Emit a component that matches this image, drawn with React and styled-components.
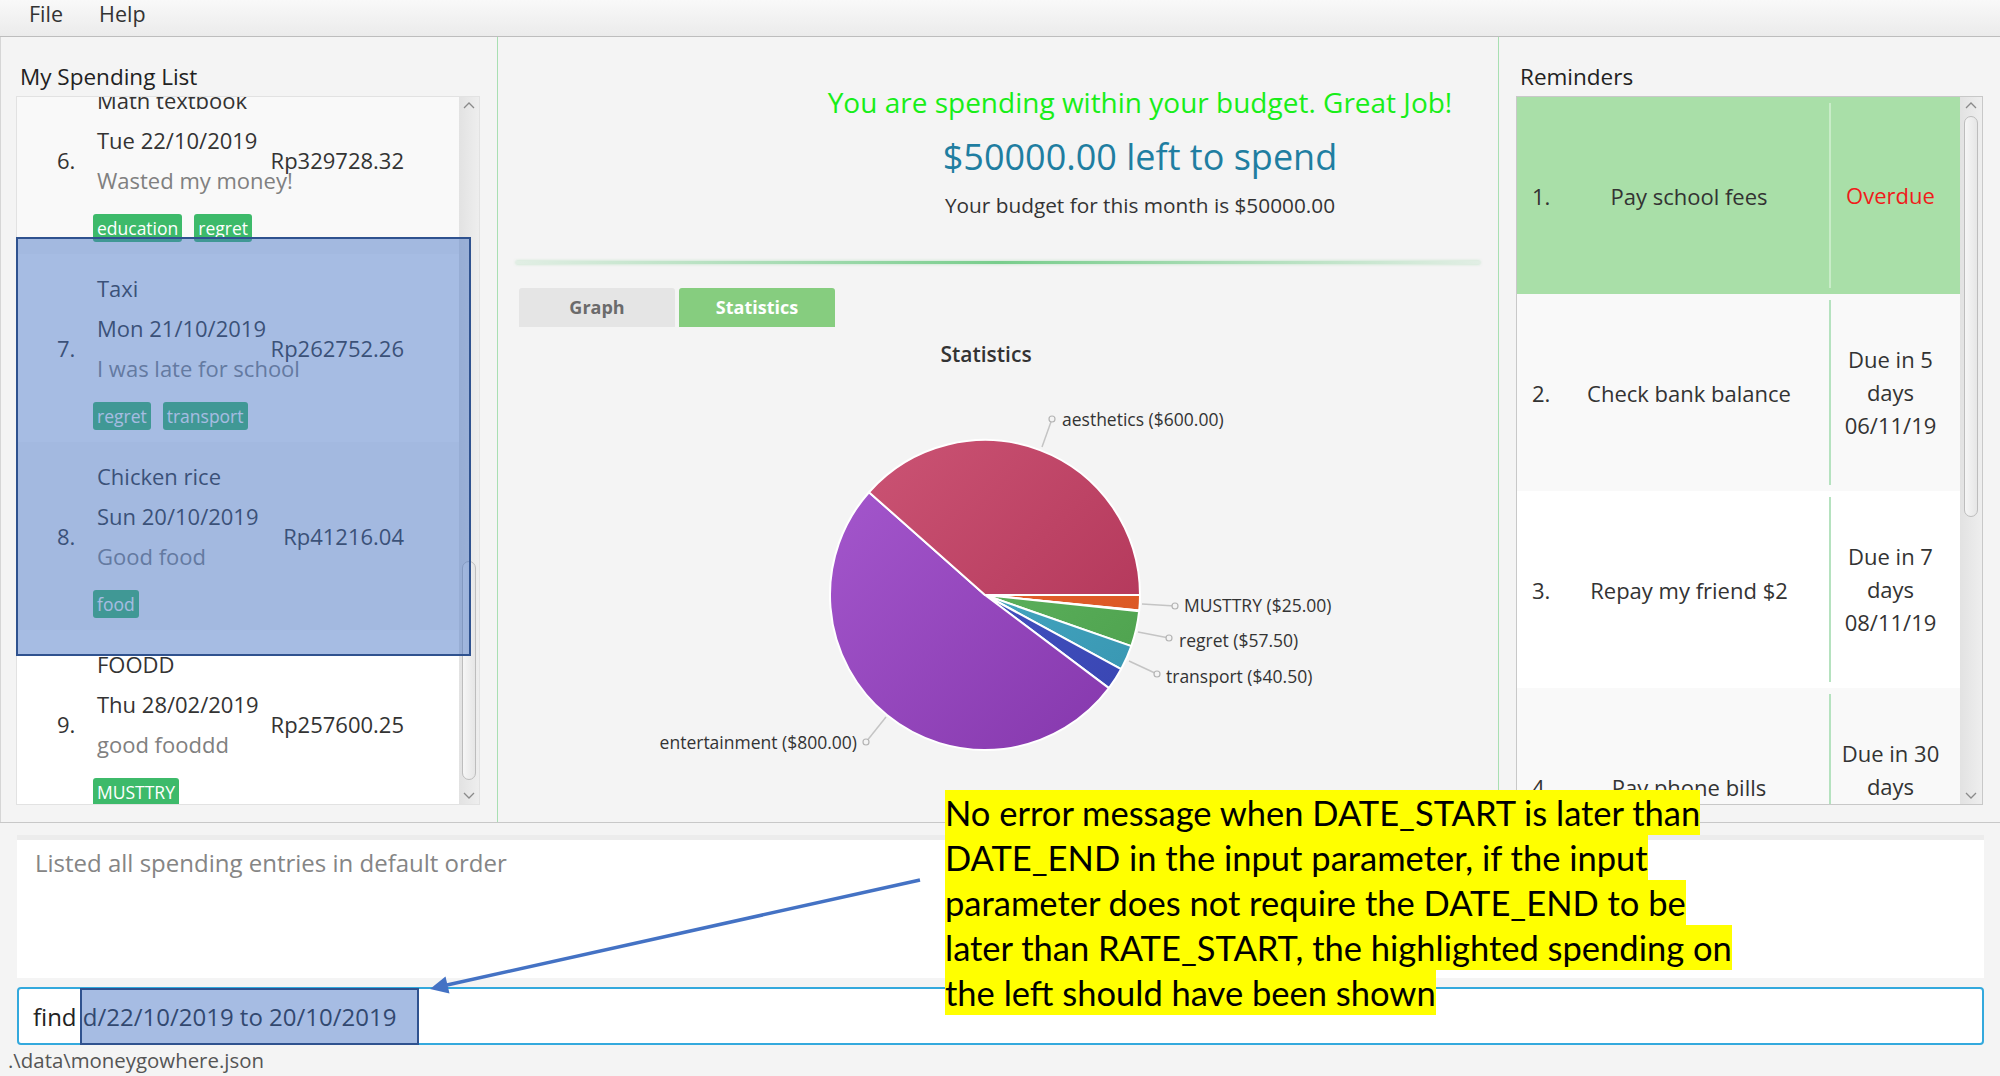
import React from 'react';
import styled, { createGlobalStyle } from 'styled-components';

const GlobalStyle = createGlobalStyle`
  html, body {
    margin: 0;
    padding: 0;
  }
  body {
    background: #f4f4f4;
    font-family: "Open Sans", "Noto Sans", sans-serif;
    color: #333;
  }
  * {
    box-sizing: border-box;
  }
`;

const Window = styled.div`
  position: relative;
  width: 2000px;
  height: 1076px;
  display: flex;
  flex-direction: column;
  overflow: hidden;
  background: #f4f4f4;
`;

const MenuBar = styled.div`
  height: 37px;
  flex: none;
  display: flex;
  align-items: flex-start;
  gap: 36px;
  padding: 1px 0 0 29px;
  background: linear-gradient(#f9f9f9, #ebebeb);
  border-bottom: 1px solid #bdbdbd;
`;

const MenuItem = styled.span`
  font-size: 21.5px;
  line-height: 26px;
  color: #333;
`;

const Main = styled.div`
  height: 786px;
  flex: none;
  display: flex;
  border-bottom: 1px solid #c8c8c8;
`;

const SidePane = styled.div`
  width: ${p => p.width}px;
  flex: none;
  display: flex;
  flex-direction: column;
  padding: 25px 17px 0 ${p => p.padLeft}px;
  border-left: ${p => (p.edge ? '1px solid #d6d6d6' : 'none')};
`;

const PaneTitle = styled.div`
  font-size: 22.5px;
  line-height: 30px;
  color: #222;
  margin: 0 0 4px 4px;
`;

const ListBox = styled.div`
  height: 709px;
  display: flex;
  background: #fff;
  border: 1px solid ${p => p.border};
`;

const Cells = styled.div`
  flex: 1;
  overflow: hidden;
`;

const CellsInner = styled.div`
  margin-top: ${p => p.offset}px;
`;

/* ---------- spending list ---------- */

const SpendRow = styled.div`
  height: 188px;
  display: flex;
  align-items: center;
  padding-left: 40px;
  background: ${p => (p.alt ? '#f9f9f9' : '#ffffff')};
  font-size: 22px;
  color: #333;
`;

const SpendIndex = styled.div`
  width: 40px;
  flex: none;
`;

const SpendBody = styled.div`
  width: 170px;
  flex: none;
  align-self: flex-start;
  padding-top: 14px;
  white-space: nowrap;
`;

const SpendLine = styled.div`
  line-height: 40px;
  color: ${p => (p.muted ? '#808080' : '#333')};
`;

const TagRow = styled.div`
  display: flex;
  gap: 12px;
  margin: 14px 0 0 -4px;
`;

const Tag = styled.span`
  height: 28px;
  line-height: 28px;
  padding: 0 4px;
  font-size: 17.5px;
  color: #fff;
  background: #3dba6a;
  border-radius: 3px;
`;

const SpendAmount = styled.div`
  flex: 1;
  text-align: right;
  padding-right: 55px;
  white-space: nowrap;
`;

/* ---------- scrollbars ---------- */

const ScrollTrack = styled.div`
  width: ${p => p.width}px;
  flex: none;
  display: flex;
  flex-direction: column;
  align-items: center;
  background: linear-gradient(to right, #e2e2e2, #eeeeee);
`;

const ScrollArrow = styled.div`
  height: 16px;
  flex: none;
  display: flex;
  align-items: center;
  justify-content: center;
`;

const ScrollSpace = styled.div`
  flex: 1;
  width: 100%;
  display: flex;
  flex-direction: column;
  align-items: center;
`;

const ScrollThumb = styled.div`
  width: 14px;
  margin-top: ${p => p.top}px;
  height: ${p => p.size}px;
  border: 1px solid #bdbdbd;
  border-radius: 7px;
  background: linear-gradient(to right, #f6f6f6, #e6e6e6);
`;

const Chevron = ({ up }) => (
  <svg width="12" height="8" viewBox="0 0 12 8">
    <polyline
      points={up ? '1,7 6,2 11,7' : '1,1 6,6 11,1'}
      fill="none"
      stroke="#8a8a8a"
      strokeWidth="1.3"
    />
  </svg>
);

const ScrollBar = ({ width, top, size }) => (
  <ScrollTrack width={width}>
    <ScrollArrow>
      <Chevron up />
    </ScrollArrow>
    <ScrollSpace>
      <ScrollThumb top={top} size={size} />
    </ScrollSpace>
    <ScrollArrow>
      <Chevron />
    </ScrollArrow>
  </ScrollTrack>
);

/* ---------- centre ---------- */

const CenterPane = styled.div`
  flex: 1;
  display: flex;
  flex-direction: column;
  border-left: 1px solid #a8dfb2;
  border-right: 1px solid #a8dfb2;
`;

const BudgetBlock = styled.div`
  padding: 47px 0 0 284px;
  text-align: center;
`;

const BudgetStatus = styled.div`
  font-size: 28px;
  line-height: 36px;
  color: #18ee18;
`;

const BudgetLeft = styled.div`
  margin-top: 12px;
  font-size: 36px;
  line-height: 50px;
  color: #1f7ea1;
`;

const BudgetNote = styled.div`
  margin-top: 9px;
  font-size: 20.8px;
  line-height: 28px;
  color: #333;
`;

const Separator = styled.div`
  margin: 42px 18px 0 18px;
  height: 3px;
  background: linear-gradient(
    to right,
    rgba(120, 205, 140, 0.15),
    #78cd8c 50%,
    rgba(120, 205, 140, 0.15)
  );
  box-shadow: 0 0 3px rgba(120, 205, 140, 0.5);
`;

const TabBar = styled.div`
  display: flex;
  gap: 4px;
  margin: 24px 0 0 21px;
`;

const Tab = styled.div`
  width: 156px;
  height: 39px;
  line-height: 39px;
  text-align: center;
  font-size: 18px;
  font-weight: 700;
  border-radius: 3px 3px 0 0;
  color: ${p => (p.active ? '#ffffff' : '#6b6b6b')};
  background: ${p => (p.active ? '#86cd7f' : '#e5e5e5')};
`;

const ChartTitle = styled.div`
  margin-top: 12px;
  line-height: 30px;
  text-align: center;
  font-size: 21px;
  font-weight: 600;
  color: #333;
  padding-right: 24px;
`;

const ChartArea = styled.div`
  flex: 1;
`;

/* ---------- reminders ---------- */

const ReminderRow = styled.div`
  height: 197px;
  display: flex;
  background: ${p => p.bg};
  font-size: 22px;
  color: #333;
`;

const ReminderIndex = styled.div`
  width: 32px;
  flex: none;
  align-self: center;
  padding-left: 15px;
`;

const ReminderDesc = styled.div`
  width: 280px;
  flex: none;
  align-self: center;
  text-align: center;
  white-space: nowrap;
`;

const ReminderDivider = styled.div`
  width: 2px;
  flex: none;
  margin: 6px 0;
  background: ${p => (p.selected ? '#c9ecc8' : '#b5e2bf')};
`;

const ReminderDue = styled.div`
  flex: 1;
  align-self: center;
  text-align: center;
  padding-right: 10px;
  line-height: 33px;
  color: ${p => (p.overdue ? '#f01b1b' : '#333')};
`;

/* ---------- bottom ---------- */

const ResultBox = styled.div`
  margin: 12px 16px 0 17px;
  height: 143px;
  flex: none;
  padding: 7px 18px;
  background: #fff;
  border-top: 5px solid #ececec;
  font-size: 24px;
  line-height: 32px;
  color: #858585;
`;

const CommandBox = styled.div`
  margin: 9px 16px 0 17px;
  height: 58px;
  flex: none;
  display: flex;
  align-items: center;
  padding-left: 14px;
  background: #fff;
  border: 2px solid #33a9dd;
  border-radius: 4px;
  font-size: 24px;
  color: #222;
  white-space: pre;
`;

const StatusBar = styled.div`
  flex: 1;
  padding-left: 8px;
  font-size: 20.4px;
  line-height: 31px;
  color: #555;
`;

/* ---------- overlays ---------- */

const Highlight = styled.div`
  position: absolute;
  left: ${p => p.x}px;
  top: ${p => p.y}px;
  width: ${p => p.w}px;
  height: ${p => p.h}px;
  background: rgba(68, 114, 196, 0.48);
  border: 2px solid #2f528f;
`;

const Annotation = styled.div`
  position: absolute;
  left: 945px;
  top: 790px;
  font-family: Lato, "Liberation Sans", sans-serif;
  font-size: 34.5px;
  color: #000;
`;

const AnnotationLine = styled.div`
  width: fit-content;
  height: 45px;
  line-height: 45px;
  background: #ffff00;
  white-space: nowrap;
`;

const ArrowLayer = styled.svg`
  position: absolute;
  left: 420px;
  top: 870px;
`;

/* ---------- data ---------- */

const spendings = [
  { no: 6, name: 'Math textbook', date: 'Tue 22/10/2019', note: 'Wasted my money!', cost: 'Rp329728.32', tags: ['education', 'regret'] },
  { no: 7, name: 'Taxi', date: 'Mon 21/10/2019', note: 'I was late for school', cost: 'Rp262752.26', tags: ['regret', 'transport'] },
  { no: 8, name: 'Chicken rice', date: 'Sun 20/10/2019', note: 'Good food', cost: 'Rp41216.04', tags: ['food'] },
  { no: 9, name: 'FOODD', date: 'Thu 28/02/2019', note: 'good fooddd', cost: 'Rp257600.25', tags: ['MUSTTRY'] },
];

const reminders = [
  { no: 1, text: 'Pay school fees', due: ['Overdue'], overdue: true, bg: '#a9dfa8' },
  { no: 2, text: 'Check bank balance', due: ['Due in 5', 'days', '06/11/19'], bg: '#f9f9f9' },
  { no: 3, text: 'Repay my friend $2', due: ['Due in 7', 'days', '08/11/19'], bg: '#ffffff' },
  { no: 4, text: 'Pay phone bills', due: ['Due in 30', 'days', '06/12/19'], bg: '#f9f9f9' },
];

// clockwise from 3 o'clock, like the JavaFX pie
const slices = [
  { value: 25, light: '#ea6c38', dark: '#d8521f' },
  { value: 1, light: '#fbb53a', dark: '#f29a10' },
  { value: 57.5, light: '#6cc06c', dark: '#4a9e4a' },
  { value: 40.5, light: '#52b5d0', dark: '#3593ae' },
  { value: 36, light: '#4b5dcc', dark: '#3743b0' },
  { value: 800, light: '#a659cf', dark: '#8436ab' },
  { value: 600, light: '#cd5676', dark: '#ad3054' },
];

const labels = [
  { text: 'aesthetics ($600.00)', tx: 564, ty: 57, mx: 554, my: 50, ex: 544, ey: 78 },
  { text: 'MUSTTRY ($25.00)', tx: 686, ty: 243, mx: 677, my: 237, ex: 644, ey: 235 },
  { text: 'regret ($57.50)', tx: 681, ty: 278, mx: 671, my: 269, ex: 640, ey: 263 },
  { text: 'transport ($40.50)', tx: 668, ty: 314, mx: 659, my: 305, ex: 631, ey: 292 },
  { text: 'entertainment ($800.00)', tx: 359, ty: 380, mx: 368, my: 373, ex: 388, ey: 348, end: true },
];

const PieChart = () => {
  const cx = 487;
  const cy = 226;
  const r = 155;
  const total = slices.reduce((s, d) => s + d.value, 0);
  let angle = 0;
  const point = a => {
    const rad = (a * Math.PI) / 180;
    return [cx + r * Math.cos(rad), cy + r * Math.sin(rad)];
  };
  const paths = slices.map((d, i) => {
    const sweep = (d.value / total) * 360;
    const [x0, y0] = point(angle);
    const [x1, y1] = point(angle + sweep);
    angle += sweep;
    const large = sweep > 180 ? 1 : 0;
    return {
      id: `slice${i}`,
      d: `M${cx},${cy} L${x0.toFixed(2)},${y0.toFixed(2)} A${r},${r} 0 ${large} 1 ${x1.toFixed(2)},${y1.toFixed(2)} Z`,
      ...d,
    };
  });

  return (
    <svg width="1000" height="440" viewBox="0 0 1000 440">
      <defs>
        {paths.map(p => (
          <linearGradient
            key={p.id}
            id={p.id}
            gradientUnits="userSpaceOnUse"
            x1={cx - r}
            y1={cy - r}
            x2={cx + r}
            y2={cy + r}
          >
            <stop offset="0" stopColor={p.light} />
            <stop offset="1" stopColor={p.dark} />
          </linearGradient>
        ))}
      </defs>
      {paths.map(p => (
        <path key={p.id} d={p.d} fill={`url(#${p.id})`} stroke="#ffffff" strokeWidth="2" strokeLinejoin="round" />
      ))}
      {labels.map(l => (
        <g key={l.text}>
          <line x1={l.mx} y1={l.my} x2={l.ex} y2={l.ey} stroke="#c4c4c4" strokeWidth="1.5" />
          <circle cx={l.mx} cy={l.my} r="3" fill="#f4f4f4" stroke="#b4b4b4" strokeWidth="1.2" />
          <text
            x={l.tx}
            y={l.ty}
            textAnchor={l.end ? 'end' : 'start'}
            fontFamily='"Open Sans", "Noto Sans", sans-serif'
            fontSize="17.5"
            fill="#333"
          >
            {l.text}
          </text>
        </g>
      ))}
    </svg>
  );
};

const Arrow = () => (
  <ArrowLayer width="510" height="130" viewBox="0 0 510 130">
    <line x1="500" y1="10" x2="27" y2="115" stroke="#4472c4" strokeWidth="3.5" />
    <polygon points="10,119 29.5,123.5 25.5,106.5" fill="#4472c4" />
  </ArrowLayer>
);

const App = () => (
  <Window>
    <GlobalStyle />
    <MenuBar>
      <MenuItem>File</MenuItem>
      <MenuItem>Help</MenuItem>
    </MenuBar>

    <Main>
      <SidePane width={497} padLeft={15} edge>
        <PaneTitle>My Spending List</PaneTitle>
        <ListBox border="#e2e2e2">
          <Cells>
            <CellsInner offset={-31}>
              {spendings.map((s, i) => (
                <SpendRow key={s.no} alt={i % 2 === 0}>
                  <SpendIndex>{s.no}.</SpendIndex>
                  <SpendBody>
                    <SpendLine>{s.name}</SpendLine>
                    <SpendLine>{s.date}</SpendLine>
                    <SpendLine muted>{s.note}</SpendLine>
                    <TagRow>
                      {s.tags.map(t => (
                        <Tag key={t}>{t}</Tag>
                      ))}
                    </TagRow>
                  </SpendBody>
                  <SpendAmount>{s.cost}</SpendAmount>
                </SpendRow>
              ))}
            </CellsInner>
          </Cells>
          <ScrollBar width={20} top={448} size={219} />
        </ListBox>
      </SidePane>

      <CenterPane>
        <BudgetBlock>
          <BudgetStatus>You are spending within your budget. Great Job!</BudgetStatus>
          <BudgetLeft>$50000.00 left to spend</BudgetLeft>
          <BudgetNote>Your budget for this month is $50000.00</BudgetNote>
        </BudgetBlock>
        <Separator />
        <TabBar>
          <Tab>Graph</Tab>
          <Tab active>Statistics</Tab>
        </TabBar>
        <ChartTitle>Statistics</ChartTitle>
        <ChartArea>
          <PieChart />
        </ChartArea>
      </CenterPane>

      <SidePane width={501} padLeft={17}>
        <PaneTitle>Reminders</PaneTitle>
        <ListBox border="#c8c8c8">
          <Cells>
            {reminders.map(r => (
              <ReminderRow key={r.no} bg={r.bg}>
                <ReminderIndex>{r.no}.</ReminderIndex>
                <ReminderDesc>{r.text}</ReminderDesc>
                <ReminderDivider selected={r.overdue} />
                <ReminderDue overdue={r.overdue}>
                  {r.due.map(line => (
                    <div key={line}>{line}</div>
                  ))}
                </ReminderDue>
              </ReminderRow>
            ))}
          </Cells>
          <ScrollBar width={22} top={3} size={401} />
        </ListBox>
      </SidePane>
    </Main>

    <ResultBox>Listed all spending entries in default order</ResultBox>
    <CommandBox>find d/22/10/2019 to 20/10/2019</CommandBox>
    <StatusBar>.\data\moneygowhere.json</StatusBar>

    <Highlight x={16} y={237} w={455} h={419} />
    <Highlight x={80} y={988} w={339} h={57} />
    <Arrow />
    <Annotation>
      <AnnotationLine>No error message when DATE_START is later than</AnnotationLine>
      <AnnotationLine>DATE_END in the input parameter, if the input</AnnotationLine>
      <AnnotationLine>parameter does not require the DATE_END to be</AnnotationLine>
      <AnnotationLine>later than RATE_START, the highlighted spending on</AnnotationLine>
      <AnnotationLine>the left should have been shown</AnnotationLine>
    </Annotation>
  </Window>
);

export default App;
